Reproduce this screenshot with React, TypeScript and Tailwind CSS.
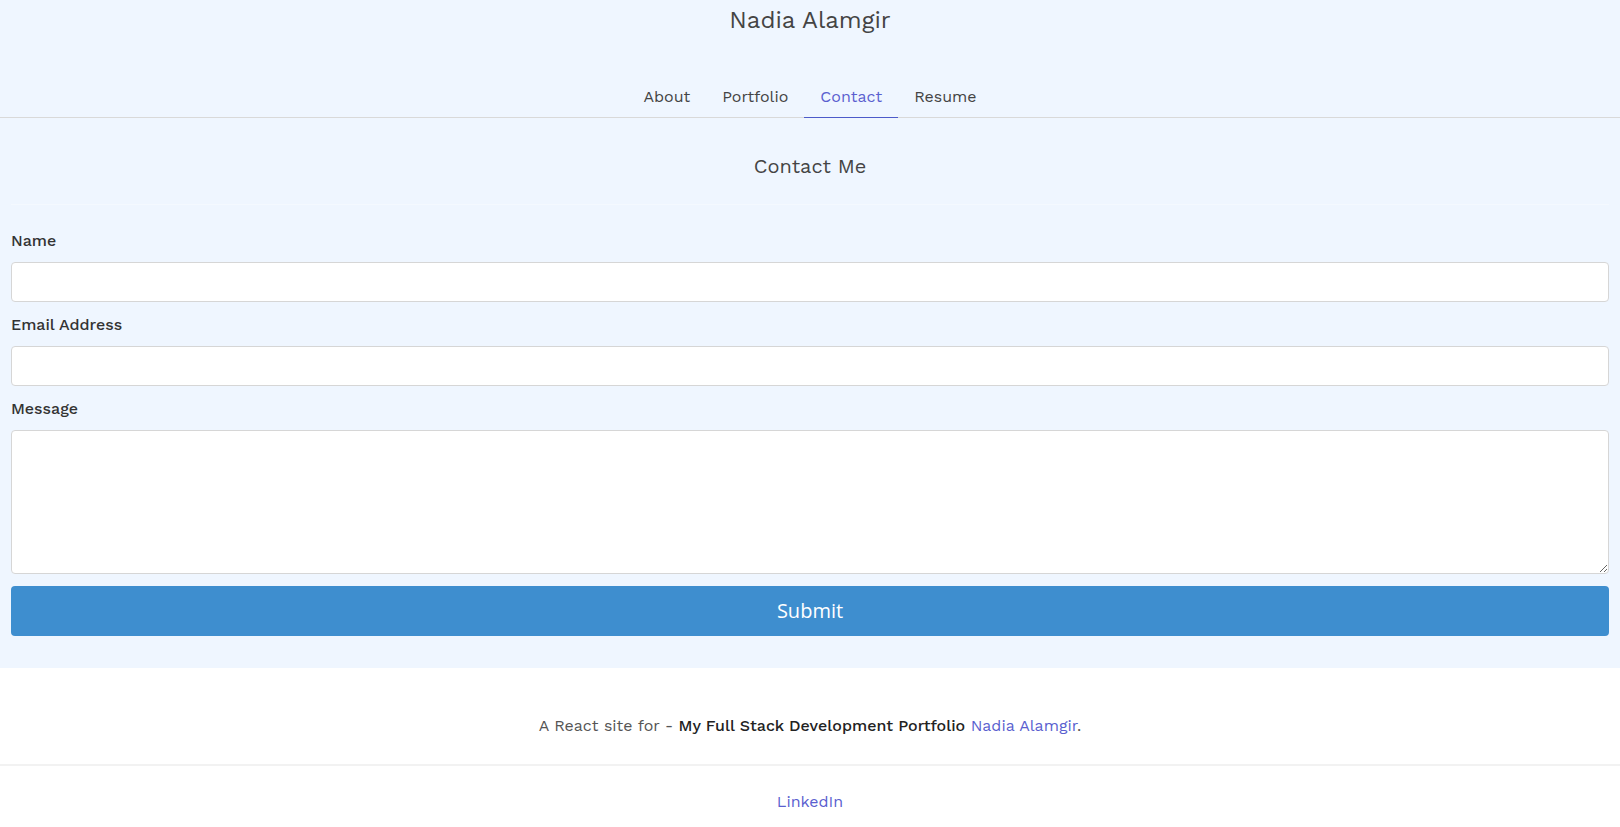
import { useState } from 'react'

const font = { fontFamily: '"Work Sans", Inter, "Noto Sans", sans-serif' }

const tabs = ['About', 'Portfolio', 'Contact', 'Resume']

export default function App() {
  const [active, setActive] = useState('Contact')
  const [form, setForm] = useState({ name: '', email: '', message: '' })

  return (
    <div className="min-h-screen bg-white text-[#444]" style={font}>
      <header className="bg-[#eff6ff] border-b border-[#d9d9d9]">
        <h1 className="pt-[6px] text-center text-[24px] leading-[28px] text-[#444]">Nadia Alamgir</h1>
        <nav className="mt-[53px] flex justify-center">
          {tabs.map((t) => (
            <button
              key={t}
              onClick={() => setActive(t)}
              className={`px-4 pb-[10px] text-[16px] leading-[20px] border-b ${
                active === t ? 'border-[#4d5bc9] text-[#5a5fcf]' : 'border-transparent text-[#444]'
              }`}
              style={{ marginBottom: -1 }}
            >
              {t}
            </button>
          ))}
        </nav>
      </header>

      <main className="bg-[#eff6ff] px-[11px] pb-[32px]">
        <div className="border-b border-[#f4f9ff] pt-[38px] pb-[27px] text-center">
          <h2 className="text-[20px] leading-[21px] text-[#444]">Contact Me</h2>
        </div>
        <form
          className="flex flex-col pt-[25px]"
          onSubmit={(e) => e.preventDefault()}
        >
          <label className="mb-[10px] text-[16px] font-medium leading-[22px] text-[#333]">Name</label>
          <input
            value={form.name}
            onChange={(e) => setForm({ ...form, name: e.target.value })}
            className="h-[40px] rounded-[4px] border border-[#d6d6d6] bg-white px-3"
          />
          <label className="mt-[12px] mb-[10px] text-[16px] font-medium leading-[22px] text-[#333]">Email Address</label>
          <input
            value={form.email}
            onChange={(e) => setForm({ ...form, email: e.target.value })}
            className="h-[40px] rounded-[4px] border border-[#d6d6d6] bg-white px-3"
          />
          <label className="mt-[12px] mb-[10px] text-[16px] font-medium leading-[22px] text-[#333]">Message</label>
          <textarea
            value={form.message}
            onChange={(e) => setForm({ ...form, message: e.target.value })}
            className="h-[144px] rounded-[4px] border border-[#d6d6d6] bg-white px-3 py-2"
          />
          <button
            type="submit"
            className="mt-[12px] h-[50px] rounded-[4px] bg-[#3e8ecf] text-[20px] text-white"
            style={{ fontFamily: '"Open Sans", "Noto Sans", sans-serif' }}
          >
            Submit
          </button>
        </form>
      </main>

      <footer className="text-center text-[16px]">
        <p className="pt-[48px] pb-[28px] leading-[20px] text-[#555]">
          A React site for - <span className="font-medium text-[#222]">My Full Stack Development Portfolio</span>{' '}
          <a href="#" className="text-[#5a5fcf]">Nadia Alamgir</a>.
        </p>
        <div className="border-t-2 border-[#f2f2f2] pt-[24px] pb-[20px]">
          <a href="#" className="leading-[20px] text-[#5a5fcf]">LinkedIn</a>
        </div>
      </footer>
    </div>
  )
}
